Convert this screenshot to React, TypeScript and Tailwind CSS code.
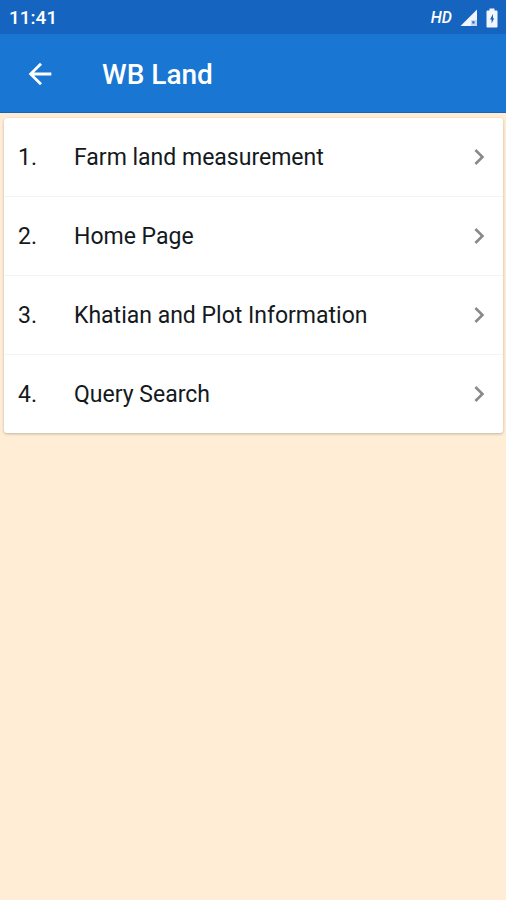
import type { ReactNode } from 'react'

interface MenuItem {
  id: number
  label: string
}

const menuItems: MenuItem[] = [
  { id: 1, label: 'Farm land measurement' },
  { id: 2, label: 'Home Page' },
  { id: 3, label: 'Khatian and Plot Information' },
  { id: 4, label: 'Query Search' },
]

function SignalIcon() {
  return (
    <svg viewBox="0 0 18 18" className="h-[18px] w-[18px]" aria-hidden="true">
      <path d="M17 0.5V17H0.5z" fill="#f1f6fd" />
      <path d="M11 11h6v6h-6z" fill="#c3d8f2" />
      <path d="M12.3 12.3h2.2v2.2h-2.2z" fill="#1f62b4" />
    </svg>
  )
}

function BatteryIcon() {
  return (
    <svg viewBox="0 0 12 20" className="h-5 w-3" aria-hidden="true">
      <path
        d="M3.5 0.5h5v2h1.9c.7 0 1.1.5 1.1 1.1v14.8c0 .7-.5 1.1-1.1 1.1H1.6c-.7 0-1.1-.5-1.1-1.1V3.6c0-.7.5-1.1 1.1-1.1h1.9z"
        fill="#f1f6fd"
      />
      <path d="M7 6 4 11.5h1.6V15.5L8.200 10.300H7z" fill="#1565c0" />
    </svg>
  )
}

function BackIcon() {
  return (
    <svg viewBox="0 0 24 24" className="h-[34px] w-[34px]" fill="currentColor" aria-hidden="true">
      <path d="M20 11H7.83l5.59-5.59L12 4l-8 8 8 8 1.41-1.41L7.83 13H20v-2z" />
    </svg>
  )
}

function ChevronIcon() {
  return (
    <svg viewBox="0 0 24 24" className="h-8 w-8 shrink-0 text-[#8a8a8a]" fill="currentColor" aria-hidden="true">
      <path d="M8.59 16.59 13.17 12 8.59 7.41 10 6l6 6-6 6z" />
    </svg>
  )
}

function StatusBar() {
  return (
    <div className="flex h-[34px] items-center justify-between bg-[#1565c0] pt-px pr-2 pl-[9px] text-white">
      <span className="text-[19px] leading-6 font-medium">11:41</span>
      <div className="flex items-center gap-2">
        <span className="text-base font-medium italic">HD</span>
        <SignalIcon />
        <BatteryIcon />
      </div>
    </div>
  )
}

function AppBar({ title }: { title: ReactNode }) {
  return (
    <header className="flex h-[79px] items-center border-b border-[#1565c0] bg-[#1976d2] pt-[2px] pl-[23px] text-white">
      <button type="button" aria-label="Back">
        <BackIcon />
      </button>
      <h1 className="ml-[45px] pt-[2px] text-[28px] leading-8 font-medium">{title}</h1>
    </header>
  )
}

function MenuRow({ id, label }: MenuItem) {
  return (
    <li className="border-b border-[#f4f4f4] last:border-b-0">
      <button type="button" className="flex h-[78px] w-full items-center pr-2 pl-[14px] text-left">
        <span className="w-14 shrink-0 pt-[2px]">{id}.</span>
        <span className="flex-1 pt-[2px]">{label}</span>
        <ChevronIcon />
      </button>
    </li>
  )
}

export default function App() {
  return (
    <div className="min-h-screen bg-[#ffedd5] font-['Roboto',sans-serif]">
      <StatusBar />
      <AppBar title="WB Land" />
      <main className="pt-[5px] pr-[3px] pb-4 pl-1">
        <ul className="rounded-[3px] bg-white text-[23px] leading-7 text-[#14191d] shadow-[0_1px_3px_rgba(0,0,0,0.25)]">
          {menuItems.map((item) => (
            <MenuRow key={item.id} {...item} />
          ))}
        </ul>
      </main>
    </div>
  )
}
